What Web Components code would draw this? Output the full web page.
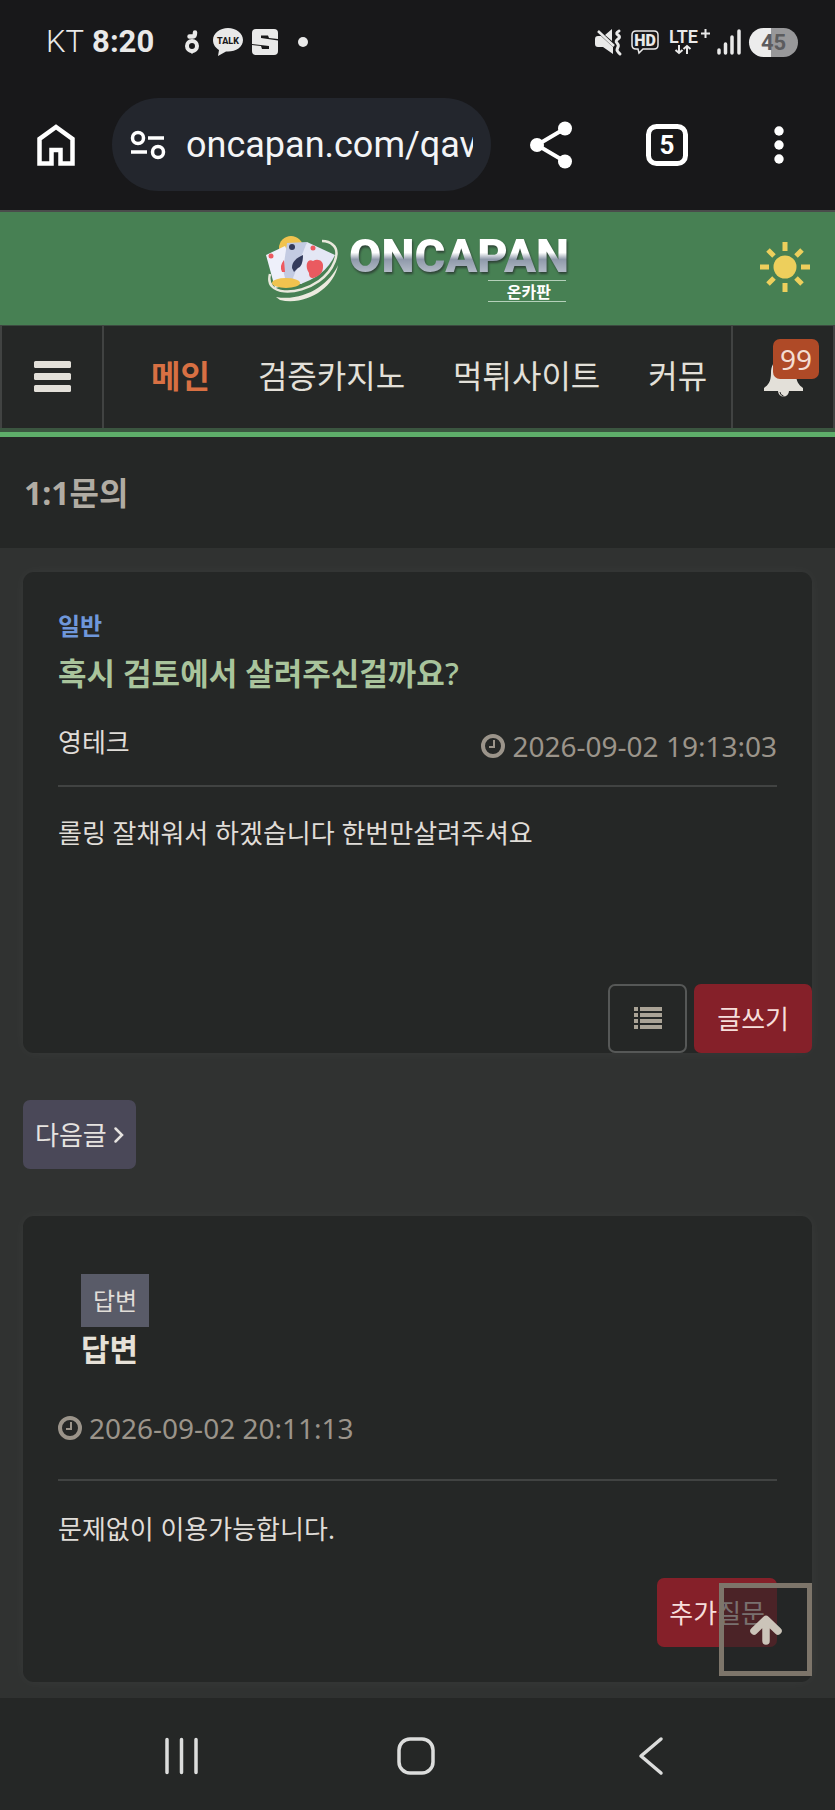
<!DOCTYPE html>
<html lang="ko">
<head>
<meta charset="utf-8">
<meta name="viewport" content="width=device-width, initial-scale=1">
<title>1:1문의 - 온카판</title>
<style>
  html { background: #303231; }
  body {
    margin: 0;
    font-family: "Noto Sans", "Noto Sans CJK KR", sans-serif;
    font-size: 26px;
    line-height: 36px;
    color: #e0ddd8;
  }
  .mark { font-weight: 500; }
</style>
</head>
<body>
<phone-screen>
  <status-bar slot="top"></status-bar>
  <browser-bar slot="top"></browser-bar>
  <site-header slot="top"></site-header>
  <site-nav slot="top"></site-nav>
  <page-title slot="top">1:1문의</page-title>

  <inquiry-card>
    <span slot="category">일반</span>
    <span slot="title">혹시 검토에서 살려주신걸까요<span class="mark">?</span></span>
    <span slot="author">영테크</span>
    <post-date slot="date">2026-09-02 19:13:03</post-date>
    롤링 잘채워서 하겠습니다 한번만살려주셔요
    <ui-button slot="actions" kind="outline" label="목록"><ui-icon name="list"></ui-icon></ui-button>
    <ui-button slot="actions" kind="danger">글쓰기</ui-button>
  </inquiry-card>

  <ui-button kind="muted">다음글<ui-icon name="chevron"></ui-icon></ui-button>

  <answer-card>
    <span slot="label">답변</span>
    <span slot="title">답변</span>
    <post-date slot="date">2026-09-02 20:11:13</post-date>
    문제없이 이용가능합니다.
    <ui-button slot="actions" kind="danger-tight">추가질문</ui-button>
  </answer-card>

  <to-top></to-top>
  <system-nav slot="bottom"></system-nav>
</phone-screen>

<script>
const define = (name, html, setup) => {
  const template = document.createElement('template');
  template.innerHTML = html;
  customElements.define(name, class extends HTMLElement {
    constructor() {
      super();
      this.attachShadow({ mode: 'open' }).append(template.content.cloneNode(true));
    }
    connectedCallback() { if (setup) setup(this, this.shadowRoot); }
  });
};

/* name: [width, height, markup] */
const icons = {
  acorn: [14, 24, '<circle cx="7" cy="16" r="5" fill="none" stroke="currentColor" stroke-width="4"/><path d="M4 21l3 3 3-3z"/><path d="M4.500 6.500h3.500q2 0 2-4" fill="none" stroke="currentColor" stroke-width="4.500" stroke-linecap="round"/>'],
  talk: [30, 28, '<path d="M15 0C7 0 0 5 0 12c0 5 3 8 6 10l-1 6 8-4.500h2c8 0 15-4.500 15-11.500S23 0 15 0z"/><text x="15" y="16" text-anchor="middle" font-family="Roboto, sans-serif" font-weight="800" font-size="9" fill="#18181a">TALK</text>'],
  slogo: [26, 26, '<rect width="26" height="26" rx="4"/><path d="M9 6.500h7L17 9l9 1v1.500L9 9zM0 15l17 2v3h-7l-1-3-9-1z" fill="#18181a"/>'],
  dot: [10, 10, '<circle cx="5" cy="5" r="5"/>'],
  mute: [28, 26, '<path d="M0 10q0-3 3-3h3l12 11v7L8 18H3q-3 0-3-3zM10 6l7-6v12z"/><path d="M3 2l16 15" stroke="currentColor" stroke-width="2.500"/><path d="M24 2q-4 2-1 4t0 4-1 4 1 4-1 3 3 4" fill="none" stroke="currentColor" stroke-width="3" stroke-linecap="round" stroke-linejoin="round"/>'],
  hd: [28, 24, '<path d="M5 1h18q4 0 4 4v10q0 4-4 4H12l-4 4-1-4H5q-4 0-4-4V5q0-4 4-4z" fill="none" stroke="currentColor" stroke-width="1.500"/><text x="14" y="16" text-anchor="middle" font-family="Roboto, sans-serif" font-weight="900" font-size="16">HD</text>'],
  lte: [42, 34, '<text x="2" y="18" font-family="Roboto, sans-serif" font-weight="600" font-size="18">LTE</text><path d="M34 8.500h9M38.500 4v9" stroke="currentColor" stroke-width="2"/><path d="M12 20v8M8.500 25l3.500 3 3.500-3M20 29v-8M16.500 24l3.500-3 3.500 3" fill="none" stroke="currentColor" stroke-width="2"/>'],
  signal: [24, 26, '<path d="M2 21v3M8.500 15v9M15 8v16M22 2v22" stroke="currentColor" stroke-width="3.500" stroke-linecap="round"/>'],
  home: [38, 42, '<path d="M2.500 39.500V15L19 3l16.500 12v24.500H23.500V26h-9v13.500z" fill="none" stroke="currentColor" stroke-width="4.500"/>'],
  tune: [36, 30, '<g fill="none" stroke="currentColor" stroke-width="3.500"><circle cx="8" cy="8" r="5.500"/><circle cx="28" cy="22" r="5.500"/><path d="M18 8h16M1 22h16"/></g>'],
  share: [42, 48, '<path d="M35 7.500L7 24l28 16.500" fill="none" stroke="currentColor" stroke-width="4"/><circle cx="7" cy="24" r="7"/><circle cx="35" cy="7.500" r="7"/><circle cx="35" cy="40.500" r="7"/>'],
  tabs: [42, 42, '<rect x="2.500" y="2.500" width="37" height="37" rx="8" fill="none" stroke="currentColor" stroke-width="5"/><text x="21" y="30" text-anchor="middle" font-family="Roboto, sans-serif" font-weight="700" font-size="26">5</text>'],
  more: [10, 38, '<circle cx="5" cy="5" r="4.700"/><circle cx="5" cy="19" r="4.700"/><circle cx="5" cy="33" r="4.700"/>'],
  sun: [50, 50, '<circle cx="25" cy="25" r="11.500"/><path d="M25 0v9M25 41v9M0 25h9M41 25h9M8 8l6 6M36 36l6 6M8 42l6-6M36 14l6-6" stroke="currentColor" stroke-width="5"/>'],
  bars: [37, 31, '<rect width="37" height="7" rx="1.500"/><rect y="12" width="37" height="7" rx="1.500"/><rect y="24" width="37" height="7" rx="1.500"/>'],
  bell: [39, 46, '<path d="M16 5a3.500 3.500 0 0 1 7 0c7 2 9 8 9 14 0 9 3 12 7 15v3H25a5.500 5.500 0 0 1-11 0H0v-3c4-3 7-6 7-15C7 13 9 7 16 5z"/><path d="M16 38q0 3 3.500 4" fill="none" stroke="#252726"/>'],
  clock: [24, 24, '<circle cx="12" cy="12" r="10" fill="none" stroke="currentColor" stroke-width="4"/><path d="M13 6v7H8" fill="none" stroke="currentColor" stroke-width="2"/>'],
  list: [28, 23, '<path d="M0 0h4v4H0zM6 0h22v4H6zM0 6h4v4H0zM6 6h22v4H6zM0 12h4v4H0zM6 12h22v4H6zM0 18h4v4H0zM6 18h22v4H6z"/>'],
  chevron: [10, 16, '<path d="M1.500 1.500L8 8l-6.500 6.500" fill="none" stroke="currentColor" stroke-width="2.500" stroke-linecap="round"/>'],
  up: [32, 30, '<path d="M16 26V6M4 16L16 4.500 28 16" fill="none" stroke="currentColor" stroke-width="7.500" stroke-linejoin="round" stroke-linecap="round"/>'],
  recents: [34, 36, '<path d="M2 1.500v33M16.500 1.500v33M31 1.500v33" stroke="currentColor" stroke-width="3.500" stroke-linecap="round"/>'],
  homekey: [38, 38, '<rect x="2" y="2" width="34" height="34" rx="11" fill="none" stroke="currentColor" stroke-width="3.500"/>'],
  back: [24, 38, '<path d="M22 2L2 19l20 17" fill="none" stroke="currentColor" stroke-width="3.500" stroke-linecap="round" stroke-linejoin="round"/>'],
  cards: [72, 66, '<circle cx="25" cy="12" r="12" fill="#f1c34f"/><path d="M0 19l19-9 16 36-26 6z" fill="#eef0fa"/><path d="M21 7l20-1-5 42-16-2-3-12z" fill="#c3cbe2"/><path d="M41 6l28 13q-10 22-38 30l-4-7z" fill="#e4e7f5"/><path d="M4 38C-2 60 32 60 53 45 68 34 75 16 67 9 64 6 60 5 56 5" fill="none" stroke="#e9e8dc" stroke-width="2.500"/><path d="M10 61C38 66 64 48 72 29 68 52 40 70 14 64z" fill="#eceadf"/><path d="M43 37C38 29 42 22 47 25c5-3 11 0 10 6 0 5-3 9-10 11-3 0-4-2-4-5z" fill="#ea5a60"/><path d="M26 32c0-6 4-10 11-13 0 8-2 12-5 13l-4 4z" fill="#343b5c"/><circle cx="26" cy="11" r="3" fill="#343b5c"/><circle cx="5" cy="20" r="2.500" fill="#ee5a60"/><circle cx="47" cy="12" r="2.500" fill="#ee5a60"/><path d="M18 24q-5 6-2 12h3z" fill="#ee5a60"/><ellipse cx="20" cy="47" rx="14" ry="5" fill="#f1c34f"/>']
};

define('ui-icon', `
  <style>:host { display: block; flex: none; } svg { display: block; fill: currentColor; overflow: visible; }</style>
`, (host, root) => {
  const [w, h, body] = icons[host.getAttribute('name')];
  if (!root.querySelector('svg')) {
    root.innerHTML += `<svg width="${w}" height="${h}" viewBox="0 0 ${w} ${h}" aria-hidden="true">${body}</svg>`;
  }
});

define('phone-screen', `
  <style>
    :host { display: flex; flex-direction: column; min-height: 100vh; }
    main {
      flex: 1; position: relative; display: flex; flex-direction: column;
      align-items: flex-start; gap: 47px; padding: 24px 23px 16px; background: #303231;
    }
  </style>
  <slot name="top"></slot>
  <main><slot></slot></main>
  <slot name="bottom"></slot>
`);

define('status-bar', `
  <style>
    :host {
      display: flex; align-items: center; height: 84px; padding: 0 37px 0 46px; box-sizing: border-box;
      background: #18181a; color: #e9e9e9; font: 300 31px/36px Roboto, sans-serif;
    }
    b { margin-left: 8px; font-weight: 700; }
    .apps { display: flex; align-items: center; gap: 9px; margin-left: 31px; }
    .apps :first-child { margin-right: 5px; }
    .apps :last-child { margin-left: 11px; }
    .state { display: flex; align-items: center; gap: 8px; margin-left: auto; }
    .battery {
      width: 49px; border-radius: 15px; text-align: center; color: #5c5c5e;
      background: linear-gradient(90deg, #ececec 45%, #98989a 45%); font: 700 22px/29px Roboto, sans-serif;
    }
  </style>
  <span>KT</span><b>8:20</b>
  <div class="apps"><ui-icon name="acorn"></ui-icon><ui-icon name="talk"></ui-icon><ui-icon name="slogo"></ui-icon><ui-icon name="dot"></ui-icon></div>
  <div class="state"><ui-icon name="mute"></ui-icon><ui-icon name="hd"></ui-icon><ui-icon name="lte"></ui-icon><ui-icon name="signal"></ui-icon><span class="battery">45</span></div>
`);

define('browser-bar', `
  <style>
    :host {
      display: flex; align-items: center; padding: 14px 0 19px;
      background: #18181a; border-bottom: 2px solid #4a4b4b; color: #fff;
    }
    button {
      flex: none; display: flex; justify-content: center; width: 112px; padding: 20px 0;
      background: none; border: 0; color: inherit;
    }
    .share { width: 120px; }
    label {
      flex: 1; min-width: 0; display: flex; align-items: center; gap: 20px; height: 93px;
      padding: 0 18px; box-sizing: border-box; border-radius: 47px; background: #23262d;
    }
    input {
      flex: 1; min-width: 0; padding: 0; border: 0; outline: 0; background: none; color: #f3f4f6;
      font: 400 36px/48px Roboto, sans-serif;
    }
  </style>
  <button aria-label="홈"><ui-icon name="home"></ui-icon></button>
  <label><ui-icon name="tune"></ui-icon><input type="text" value="oncapan.com/qav" aria-label="주소"></label>
  <button class="share" aria-label="공유"><ui-icon name="share"></ui-icon></button>
  <button aria-label="탭"><ui-icon name="tabs"></ui-icon></button>
  <button aria-label="더보기"><ui-icon name="more"></ui-icon></button>
`);

define('site-header', `
  <style>
    :host {
      display: grid; grid-template-columns: 1fr auto 1fr; align-items: center; height: 113px;
      background: #478053;
    }
    a { grid-column: 2; display: flex; align-items: center; gap: 11px; color: #fff; text-decoration: none; }
    .word { display: flex; flex-direction: column; align-items: flex-end; }
    .name {
      font: 900 47px/42px Roboto, sans-serif;
      background: linear-gradient(#fff 42%, #8f99aa 58%, #b4bcc8 90%);
      -webkit-background-clip: text; background-clip: text; color: transparent;
      filter: drop-shadow(1px 2px 1px #2e4336);
    }
    .sub {
      width: 78px; margin: 3px 3px 0 0; box-sizing: border-box; padding-left: 4px;
      border: solid #b5d0ba; border-width: 1px 0; text-align: center;
      font: 700 16px/20px "Noto Sans CJK KR", sans-serif;
    }
    button { justify-self: end; margin-right: 25px; padding: 0 0 4px; border: 0; background: none; color: #edcf5c; }
  </style>
  <a href="#"><ui-icon name="cards"></ui-icon><span class="word"><span class="name">ONCAPAN</span><span class="sub">온카판</span></span></a>
  <button aria-label="밝은 화면"><ui-icon name="sun"></ui-icon></button>
`);

define('site-nav', `
  <style>
    :host {
      display: flex; height: 103px; padding-bottom: 4px; color: #e3e0d9;
      background: linear-gradient(#252726 103px, #3b5640 103px);
      border-bottom: 5px solid #5eae6a; box-shadow: inset 0 1px #3c4a40;
    }
    button {
      position: relative; flex: none; display: flex; align-items: center; justify-content: center;
      width: 104px; padding: 0; border: solid #414342; border-width: 0 2px; background: none;
      color: inherit; font-family: inherit;
    }
    nav { flex: 1; min-width: 0; display: flex; align-items: center; gap: 48px; padding: 0 22px 2px 47px; overflow: hidden; }
    a { flex: none; color: inherit; text-decoration: none; font-size: 32px; line-height: 44px; }
    a[aria-current] { color: #d87043; font-weight: 700; }
    .count {
      position: absolute; top: 14px; right: 14px; width: 46px; border-radius: 7px;
      background: #af4a27; color: #f3ddd2; font-size: 28px; line-height: 40px; text-align: center;
    }
  </style>
  <button aria-label="메뉴"><ui-icon name="bars"></ui-icon></button>
  <nav><a href="#" aria-current="page">메인</a><a href="#">검증카지노</a><a href="#">먹튀사이트</a><a href="#">커뮤</a></nav>
  <button aria-label="알림"><ui-icon name="bell"></ui-icon><span class="count">99</span></button>
`);

define('page-title', `
  <style>
    :host { display: block; padding: 34px 24px 33px; background: #252726; color: #b1aca3; }
    h1 { margin: 0; font-size: 32px; line-height: 44px; }
  </style>
  <h1><slot></slot></h1>
`);

define('post-date', `
  <style>
    :host { display: flex; align-items: center; gap: 7px; color: #9b948a; font-size: 28px; line-height: 36px; }
  </style>
  <ui-icon name="clock"></ui-icon><time><slot></slot></time>
`);

define('ui-button', `
  <style>
    :host { display: block; flex: none; }
    button {
      display: flex; align-items: center; justify-content: center; gap: 7px; height: 69px;
      padding: 0 12px; border: 0; border-radius: 7px; font: inherit; color: #e6e3e0; background: #4a4858;
    }
    :host([kind="danger"]) button { padding: 0 23px; }
    :host([kind^="danger"]) button { background: #852029; color: #f6dedb; }
    :host([kind="outline"]) button { width: 79px; background: none; border: 2px solid #565857; color: #aaa396; }
  </style>
  <button><slot></slot></button>
`, (host, root) => {
  if (host.hasAttribute('label')) root.querySelector('button').setAttribute('aria-label', host.getAttribute('label'));
});

const cardStyle = `
  :host {
    display: block; width: 100%; box-sizing: border-box; border-radius: 11px;
    background: #252726; box-shadow: 0 0 14px rgba(255, 255, 255, .04);
  }
  h2 { margin: 0; font-size: 31px; }
  .text { line-height: 40px; }
  .actions { display: flex; justify-content: flex-end; gap: 7px; }
`;

define('inquiry-card', `
  <style>${cardStyle}
    .post { padding: 36px 35px 0; }
    .category { color: #6f97da; font-size: 24px; font-weight: 700; line-height: 36px; }
    h2 { margin-top: 4px; line-height: 50px; color: #a9c49c; }
    .meta {
      display: flex; justify-content: space-between; height: 40px;
      padding: 26px 0 21px; border-bottom: 2px solid #414342;
    }
    .date { align-self: flex-end; }
    .text { min-height: 171px; padding-top: 26px; }
  </style>
  <article>
    <div class="post">
      <div class="category"><slot name="category"></slot></div>
      <h2><slot name="title"></slot></h2>
      <div class="meta"><span><slot name="author"></slot></span><span class="date"><slot name="date"></slot></span></div>
      <div class="text"><slot></slot></div>
    </div>
    <div class="actions"><slot name="actions"></slot></div>
  </article>
`);

define('answer-card', `
  <style>${cardStyle}
    :host { padding: 58px 35px 35px; }
    header { padding: 0 23px; }
    .label { display: inline-block; padding: 0 12px; background: #595b68; font-size: 24px; line-height: 53px; vertical-align: top; }
    h2 { line-height: 44px; color: #e6e1d8; }
    .date { padding: 39px 0 33px; border-bottom: 2px solid #414342; }
    .text { padding: 28px 0 29px; }
  </style>
  <article>
    <header><span class="label"><slot name="label"></slot></span><h2><slot name="title"></slot></h2></header>
    <div class="date"><slot name="date"></slot></div>
    <div class="text"><slot></slot></div>
    <div class="actions"><slot name="actions"></slot></div>
  </article>
`);

define('to-top', `
  <style>
    :host { position: absolute; right: 23px; bottom: 22px; }
    button {
      display: flex; align-items: center; justify-content: center; width: 93px; height: 93px; padding: 0;
      border: 5px solid #7d756a; background: rgba(37, 39, 38, .6); color: #cbc4b9;
    }
  </style>
  <button aria-label="맨 위로"><ui-icon name="up"></ui-icon></button>
`);

define('system-nav', `
  <style>
    :host { display: flex; height: 112px; padding: 0 67px 0 65px; background: #252726; color: #dcdddc; }
    button {
      flex: 1; display: flex; align-items: center; justify-content: center; padding: 4px 0 0;
      border: 0; background: none; color: inherit;
    }
  </style>
  <button aria-label="최근 앱"><ui-icon name="recents"></ui-icon></button>
  <button aria-label="홈 화면"><ui-icon name="homekey"></ui-icon></button>
  <button aria-label="뒤로"><ui-icon name="back"></ui-icon></button>
`);
</script>
</body>
</html>
